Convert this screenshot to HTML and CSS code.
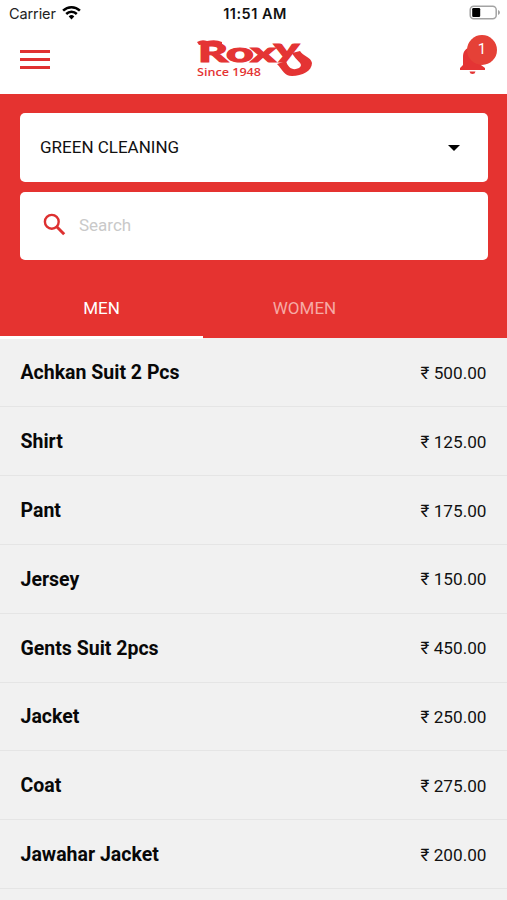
FILE: index.html
```html
<!DOCTYPE html>
<html lang="en">
<head>
<meta charset="utf-8">
<title>Roxy price list</title>
<link rel="stylesheet" href="styles.css">
</head>
<body>
<div class="status">
  <div class="carrier">Carrier
    <svg class="wifi" width="19" height="15" viewBox="0 0 19 15"><g fill="none" stroke="#000" stroke-width="2.5"><path d="M1.1 5.6a12 12 0 0 1 16.8 0"/><path d="M4.2 9a7.6 7.6 0 0 1 10.6 0"/></g><path d="M6.7 11.4a4 4 0 0 1 5.6 0L9.5 14.4z"/></svg>
  </div>
  <div class="time">11:51 AM</div>
  <svg class="battery" width="32" height="16" viewBox="0 0 32 16"><rect x="1.2" y="1.2" width="26" height="12.6" rx="3.5" fill="#fff" stroke="#a3a3a3" stroke-width="1.5"/><rect x="3.2" y="3.1" width="8" height="8.8" rx="1.2"/><path d="M29 5v5q2-.8 2-2.5T29 5z" fill="#a3a3a3"/></svg>
</div>
<header class="header">
  <div class="menu"><i></i><i></i><i></i></div>
  <svg class="logo" width="118" height="42" viewBox="0 0 118 42">
    <text class="brand" transform="translate(2 23.5) scale(1.78 1)"><tspan font-size="26">R</tspan><tspan font-size="27">ox</tspan><tspan font-size="27" dy="-3.5">y</tspan></text>
    <path d="M96 15l8-2c3 5 11 6 12 12 0 8-10 13-20 13-8 0-9-6-15-12l9-3c2 7 7 10 13 7 6-4-3-7-7-15z"/>
    <path d="M1 4q5-3 10-1 9-2 15 1v4q-12-3-23-1z"/>
    <text class="since" x="1" y="38" textLength="64" lengthAdjust="spacingAndGlyphs">Since 1948</text>
  </svg>
  <div class="alerts">
    <svg width="28" height="34" viewBox="0 0 28 34"><path d="M0 29v-2l3-3v-8c0-6 3-9 8-10V4h3v2c5 1 7 4 7 10v8l4 3v2zM9.5 30.5h6q-.5 2.5-3 2.5t-3-2.5z" fill="#e43434"/></svg>
    <span class="badge">1</span>
  </div>
</header>
<section class="filters">
  <div class="field select"><span>GREEN CLEANING</span><i class="caret"></i></div>
  <div class="field search">
    <svg width="23" height="23" viewBox="0 0 23 23" fill="none" stroke="#dd3030"><circle cx="8.8" cy="8.8" r="6.9" stroke-width="2.4"/><path d="M14 14l7.2 7.2" stroke-width="3"/></svg>
    <span>Search</span>
  </div>
  <nav class="tabs"><div class="tab active">MEN</div><div class="tab">WOMEN</div></nav>
</section>
<main class="list">
  <div class="row"><b>Achkan Suit 2 Pcs</b><span>₹ 500.00</span></div>
  <div class="row"><b>Shirt</b><span>₹ 125.00</span></div>
  <div class="row"><b>Pant</b><span>₹ 175.00</span></div>
  <div class="row"><b>Jersey</b><span>₹ 150.00</span></div>
  <div class="row"><b>Gents Suit 2pcs</b><span>₹ 450.00</span></div>
  <div class="row"><b>Jacket</b><span>₹ 250.00</span></div>
  <div class="row"><b>Coat</b><span>₹ 275.00</span></div>
  <div class="row"><b>Jawahar Jacket</b><span>₹ 200.00</span></div>
</main>
</body>
</html>
```
FILE: styles.css
```css
* { box-sizing: border-box; }
body { margin: 0; height: 900px; overflow: hidden; background: #f1f1f1; font-family: Roboto, "Noto Sans", sans-serif; color: #111; }
.status { height: 28px; background: #fff; display: grid; grid-template-columns: 1fr auto 1fr; align-items: center; padding: 0 6px 2px 9px; font-family: Inter, sans-serif; font-size: 14.5px; }
.carrier { display: flex; align-items: center; gap: 6px; color: #222; letter-spacing: -.1px; }
.wifi { margin-top: -1px; }
.time { font-weight: 600; letter-spacing: .5px; }
.battery { justify-self: end; }
.header { height: 66px; background: #fff; display: flex; justify-content: space-between; padding: 0 10px 0 20px; }
.menu { width: 30px; margin-top: 22px; display: flex; flex-direction: column; gap: 5px; }
.menu i { height: 3px; background: #e03131; }
.logo { margin: 10px 0 0 1px; fill: #e43434; overflow: visible; }
.brand { font-family: Lato, sans-serif; font-weight: 900; letter-spacing: -1.2px; stroke: #e43434; stroke-width: 1; }
.since { font-family: "Open Sans", sans-serif; font-weight: 600; font-size: 10px; }
.alerts { position: relative; width: 38px; height: 48px; }
.alerts svg { position: absolute; left: 1px; top: 13px; }
.badge { position: absolute; left: 8px; top: 7px; width: 30px; height: 30px; border-radius: 50%; background: #e54137; color: #fff; font-size: 15px; line-height: 28px; text-align: center; }
.filters { height: 244px; background: #e53330; padding: 19px 19px 0 20px; display: flex; flex-direction: column; gap: 10px; }
.field { height: 68.5px; flex: none; background: #fff; border-radius: 5px; display: flex; align-items: center; font-size: 17px; padding-bottom: 2px; }
.select { justify-content: space-between; padding: 0 28px 1px 20px; }
.caret { border: 6px solid transparent; border-top-color: #000; border-bottom: 0; margin-top: 2px; }
.search { padding-left: 23px; gap: 13px; color: #c9c9c9; }
.tabs { display: flex; margin: 10px -19px 0 -20px; height: 59px; }
.tab { width: 203px; text-align: center; line-height: 57px; font-size: 17px; color: #f6aaa5; }
.active { color: #fff; border-bottom: 3px solid #fff; }
.list { padding-top: .6px; }
.row { height: 68.8px; padding: 1px 20.5px 0; display: flex; align-items: center; justify-content: space-between; border-bottom: 1px solid #e5e5e5; font-size: 17.2px; }
.row b { font-size: 19.5px; font-weight: 700; color: #080808; }
```
